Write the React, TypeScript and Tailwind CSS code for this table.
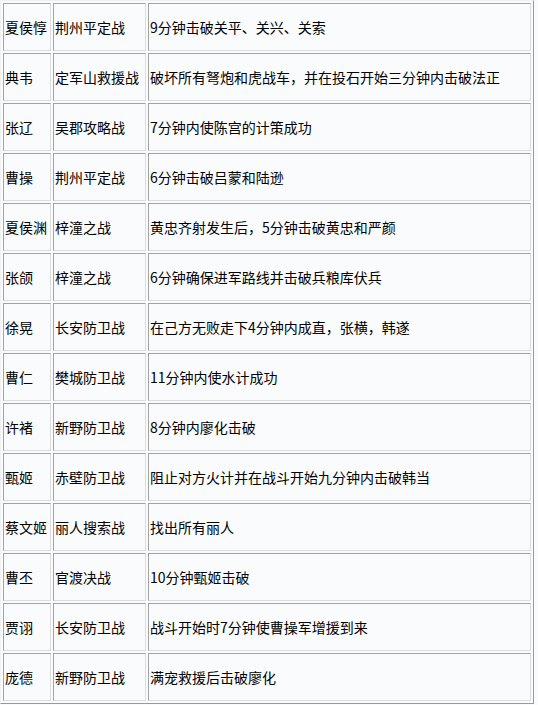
const rows: [string, string, string][] = [
  ["夏侯惇", "荆州平定战", "9分钟击破关平、关兴、关索"],
  ["典韦", "定军山救援战", "破坏所有弩炮和虎战车，并在投石开始三分钟内击破法正"],
  ["张辽", "吴郡攻略战", "7分钟内使陈宫的计策成功"],
  ["曹操", "荆州平定战", "6分钟击破吕蒙和陆逊"],
  ["夏侯渊", "梓潼之战", "黄忠齐射发生后，5分钟击破黄忠和严颜"],
  ["张颌", "梓潼之战", "6分钟确保进军路线并击破兵粮库伏兵"],
  ["徐晃", "长安防卫战", "在己方无败走下4分钟内成直，张横，韩遂"],
  ["曹仁", "樊城防卫战", "11分钟内使水计成功"],
  ["许褚", "新野防卫战", "8分钟内廖化击破"],
  ["甄姬", "赤壁防卫战", "阻止对方火计并在战斗开始九分钟内击破韩当"],
  ["蔡文姬", "丽人搜索战", "找出所有丽人"],
  ["曹丕", "官渡决战", "10分钟甄姬击破"],
  ["贾诩", "长安防卫战", "战斗开始时7分钟使曹操军增援到来"],
  ["庞德", "新野防卫战", "满宠救援后击破廖化"],
];

function Cell({ text }: { text: string }) {
  return (
    <div className="h-[48px] flex items-center pl-[1px] border border-t-[#a3a3a3] border-l-[#a3a3a3] border-r-[#dcdcdc] border-b-[#dcdcdc] whitespace-nowrap overflow-hidden">
      {text}
    </div>
  );
}

export default function App() {
  return (
    <div
      className="min-h-[705px] w-[538px] bg-[#f9fbfd] text-[14px] text-black"
      style={{ fontFamily: '"Noto Sans CJK SC", "Noto Sans", sans-serif' }}
    >
      <div className="w-[534px] flex flex-col gap-[2px] p-[2px] border border-t-[#f0f0f0] border-l-[#f0f0f0] border-r-[#9a9a9a] border-b-[#9a9a9a]">
        {rows.map(([name, battle, cond]) => (
          <div key={name} className="grid grid-cols-[48px_93px_383px] gap-[2px]">
            <Cell text={name} />
            <Cell text={battle} />
            <Cell text={cond} />
          </div>
        ))}
      </div>
    </div>
  );
}
